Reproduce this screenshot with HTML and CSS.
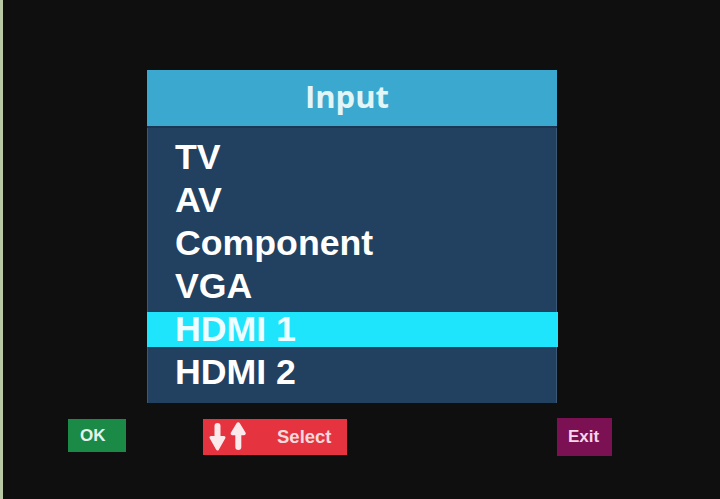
FILE: index.html
```html
<!DOCTYPE html>
<html lang="en">
<head>
    <meta charset="UTF-8">
    <meta name="viewport" content="width=device-width, initial-scale=1.0">
    <title>Input Source Menu</title>
    <link rel="stylesheet" href="styles.css">
</head>
<body>

<div class="screen">
    <!-- Source selection menu -->
    <div class="menu">
        <div class="menu-title">Input</div>
        <ul class="menu-list">
            <li>TV</li>
            <li>AV</li>
            <li>Component</li>
            <li>VGA</li>
            <li class="active">HDMI 1</li>
            <li>HDMI 2</li>
        </ul>
    </div>

    <!-- Remote hints -->
    <div class="hints">
        <div class="hint ok">OK</div>
        <div class="hint select">
            <svg class="arrows" width="38" height="30" viewBox="0 0 38 30">
                <rect x="5.5" y="1" width="6" height="17" rx="3" fill="#fbe9ec"/>
                <path d="M2 15.5 L15 15.5 L8.5 27 Z" fill="#fbe9ec" stroke="#fbe9ec" stroke-width="3" stroke-linejoin="round"/>
                <path d="M23.5 11.5 L35 11.5 L29.2 2 Z" fill="#fbe9ec" stroke="#fbe9ec" stroke-width="3.5" stroke-linejoin="round"/>
                <rect x="26.3" y="9" width="6" height="19" rx="3" fill="#fbe9ec"/>
            </svg>
            <span>Select</span>
        </div>
        <div class="hint exit">Exit</div>
    </div>
</div>

</body>
</html>
```

FILE: styles.css
```css
/* Basic reset */
html, body {
    margin: 0;
    padding: 0;
    height: 100%;
}

body {
    background-color: #0f0f0f;
    border-left: 3px solid #b9c8a4;
    font-family: "Liberation Sans", Arial, sans-serif;
    overflow: hidden;
}

/* Whole TV screen area */
.screen {
    padding: 70px 0 0 144px;
}

/* Menu panel */
.menu {
    width: 410px;
    background-color: #22405f;
    border-left: 1px solid #3b5977;
    border-right: 1px solid #3b5977;
    box-sizing: border-box;
}

.menu-title {
    height: 58px;
    line-height: 53px;
    padding-right: 10px;
    background-color: #3ba8cf;
    border-bottom: 2px solid #1b3653;
    box-sizing: border-box;
    margin: 0 -1px;
    text-align: center;
    font-family: "Open Sans", sans-serif;
    font-weight: 700;
    font-size: 31px;
    color: #e2f5f7;
}

.menu-list {
    list-style: none;
    margin: 0;
    padding: 12px 0 13px 0;
    display: flex;
    flex-direction: column;
    gap: 8px;
}

.menu-list li {
    height: 35px;
    line-height: 35px;
    padding-left: 27px;
    font-size: 35.7px;
    font-weight: bold;
    color: #ffffff;
}

.menu-list li.active {
    background-color: #1ee5fc;
    color: #eefdff;
    margin: 0 -2px 0 -1px;
    padding-left: 28px;
}

/* Bottom hint buttons */
.hints {
    display: flex;
    align-items: flex-start;
    margin-left: -79px;
    margin-top: 15px;
}

.hint {
    display: flex;
    align-items: center;
    box-sizing: border-box;
    font-weight: bold;
    font-size: 17px;
}

.ok {
    width: 58px;
    height: 33px;
    margin-top: 1px;
    padding-left: 12px;
    background-color: #1b8a47;
    color: #e6f3ea;
}

.select {
    width: 144px;
    height: 36px;
    margin-top: 1px;
    margin-left: 77px;
    padding-left: 6px;
    font-size: 18.5px;
    background-color: #e5343f;
    color: #f6d8de;
}

.select span {
    margin-left: 30px;
}

.arrows {
    display: block;
}

.exit {
    width: 55px;
    height: 38px;
    margin-left: 210px;
    padding-left: 11px;
    background-color: #7b1152;
    color: #f5d6ea;
}
```
